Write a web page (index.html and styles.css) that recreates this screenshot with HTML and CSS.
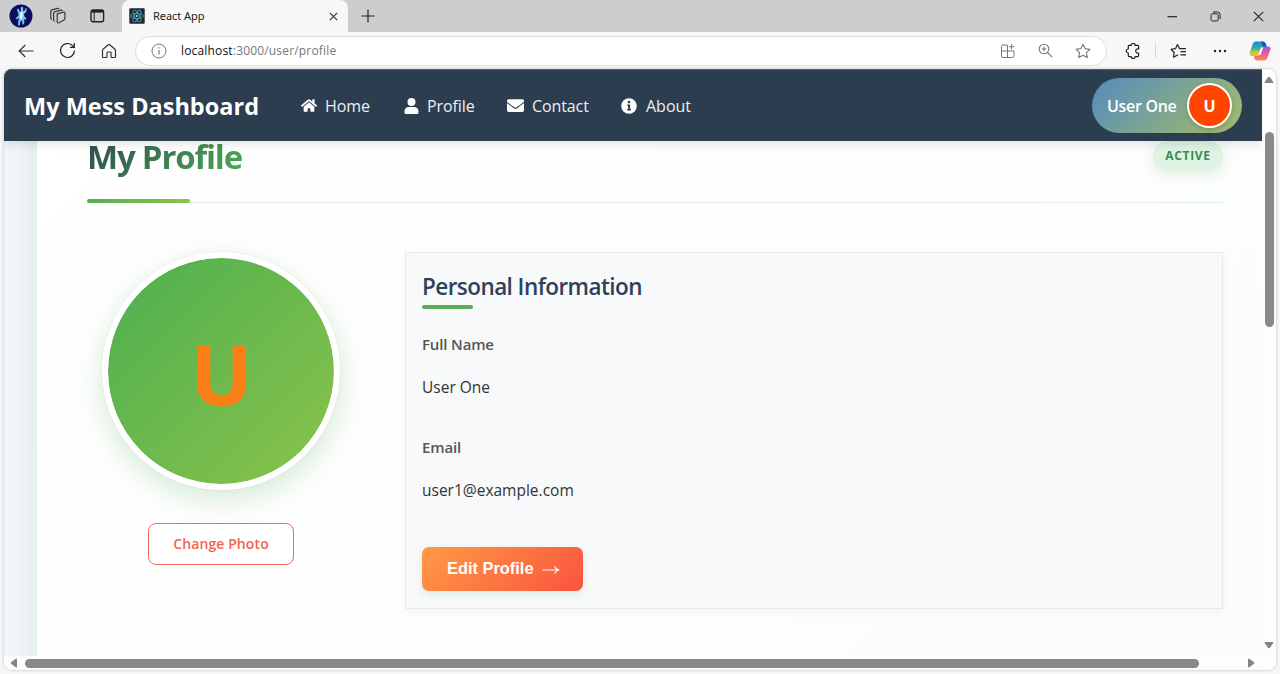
FILE: index.html
```html
<!DOCTYPE html>
<html lang="en">
<head>
<meta charset="utf-8">
<title>React App</title>
<link rel="stylesheet" href="styles.css">
</head>
<body>
<div class="browser">
  <div class="tabstrip">
    <svg class="avatar-icon" width="24" height="24" viewBox="0 0 24 24"><circle cx="12" cy="12" r="11.500" fill="#0b0f5c"/><path d="M8.500 4.500l1.500 1 .8 2.500 1-.8V3.500l1.500-1 1 1.500-.5 3 2-.5.8-2.500 1 .3-.3 3.500-2.500 2.500.8 2.500 1.600 1-.4 2-1.800-.6.4 3.500-1 2-1-.5-.3-4-1.800 1.500-.5 3.500-1.700.5.200-4.500 1-3.500-2 1.500-1.800-.3 1-1.500 2-2-.3-2.500-1.300-3z" fill="#7cc4f3"/><path d="M11.300 8l2.200.3.200 3.500-1.500 4-1.500-2 .6-2.500z" fill="#f2fbff"/></svg>
    <svg class="workspaces" width="18" height="18" viewBox="0 0 18 18" fill="none" stroke="#3b3b3b" stroke-width="1.200" stroke-linejoin="round"><path d="M8.200 6.800l6.300-1.600q1.400-.3 1.400 1.100v5.200q0 1-.9 1.400l-5 2.900q-1.500.7-1.800-.8V8q0-.8 0-1.200z"/><path d="M5.800 14.200q-1 0-1.200-1V6.100q0-1 .9-1.300L12 3.100q1-.2 1.300.9"/><path d="M3 12.300q-1-.1-1.200-1V4.200q0-1 .9-1.300l6-1.600q1-.2 1.300.7"/></svg>
    <svg class="vtabs" width="15" height="14" viewBox="0 0 15 14" fill="none" stroke="#222" stroke-width="1.400"><rect x="1" y="1" width="12.600" height="11.800" rx="2"/><path d="M1.500 2.300h11.600" stroke-width="2.600"/><path d="M4.200 3v9.500" stroke-width="1"/></svg>
    <div class="tab">
      <svg width="16" height="16" viewBox="0 0 16 16" fill="none"><rect x=".3" y=".3" width="15.400" height="15.400" rx="1" fill="#20292d"/><g stroke="#4b9cad" stroke-width=".9"><ellipse cx="8" cy="8" rx="6.500" ry="2.500"/><ellipse cx="8" cy="8" rx="6.500" ry="2.500" transform="rotate(60 8 8)"/><ellipse cx="8" cy="8" rx="6.500" ry="2.500" transform="rotate(120 8 8)"/></g><circle cx="8" cy="8" r="1.200" fill="#61c5da"/></svg>
      <span class="tab-title">React App</span>
      <svg class="tab-close" width="9" height="9" viewBox="0 0 9 9" stroke="#333" stroke-width="1.200"><path d="M.8.8l7.400 7.400M8.200.8L.8 8.200"/></svg>
    </div>
    <svg class="new-tab" width="14" height="14" viewBox="0 0 14 14" stroke="#222" stroke-width="1.200"><path d="M.5 7h13M7 .5v13"/></svg>
    <div class="window-buttons">
      <svg width="11" height="11" viewBox="0 0 11 11" stroke="#222" stroke-width="1.200"><path d="M.5 5.700h9.500"/></svg>
      <svg width="11" height="11" viewBox="0 0 11 11" fill="none" stroke="#222" stroke-width="1"><rect x="1" y="2.800" width="7.200" height="7.200" rx="1.500"/><path d="M3 1h4.500q2.600 0 2.600 2.600V8"/></svg>
      <svg width="11" height="11" viewBox="0 0 11 11" stroke="#222" stroke-width="1.100"><path d="M.8.8l9.400 9.400M10.200.8L.8 10.200"/></svg>
    </div>
  </div>
  <div class="toolbar">
    <svg width="16" height="14" viewBox="0 0 16 14" fill="none" stroke="#333" stroke-width="1.200"><path d="M15.500 7H1.200M7.300 1L1.200 7l6.100 6"/></svg>
    <svg width="17" height="17" viewBox="0 0 17 17" fill="none" stroke="#222" stroke-width="1.200"><path d="M15.500 8.500A7 7 0 1 1 13.300 3.400L15 5M15.300 1v4.300H11"/></svg>
    <svg width="16" height="16" viewBox="0 0 16 16" fill="none" stroke="#333" stroke-width="1.200" stroke-linejoin="round"><path d="M1.500 7.200q0-.6.500-1L7.300 1.700q.7-.6 1.400 0L14 6.200q.5.400.5 1v6.500q0 .8-.8.800h-2.900q-.8 0-.8-.8V10Q10 9 9 9H7Q6 9 6 10v3.700q0 .8-.8.8H2.300q-.8 0-.8-.8z"/></svg>
    <div class="address">
      <svg width="16" height="16" viewBox="0 0 16 16" fill="none" stroke="#777"><circle cx="8" cy="8" r="7"/><path d="M8 7v4.500M8 4.300v1.300" stroke-width="1.200"/></svg>
      <span class="url"><b>localhost</b>:3000/user/profile</span>
      <div class="address-icons">
        <svg width="16" height="16" viewBox="0 0 16 16" fill="none" stroke="#777"><path d="M7 2H3Q1.500 2 1.500 3.500V13Q1.500 14.500 3 14.500h9.500q1.500 0 1.500-1.500V8H1.500M7.500 2v12.500M11.500 1v5.500M8.800 3.700h5.500"/></svg>
        <svg width="15" height="15" viewBox="0 0 15 15" fill="none" stroke="#777" stroke-width="1.100"><circle cx="6" cy="6" r="4.800"/><path d="M9.500 9.500l4.700 4.700M6 3.700v4.600M3.700 6h4.600"/></svg>
        <svg width="16" height="16" viewBox="0 0 16 16" fill="none" stroke="#777" stroke-width="1.100" stroke-linejoin="round"><path d="M8 1.200l2.100 4.400 4.800.7-3.500 3.400.9 4.900L8 12.300l-4.300 2.300.9-4.900L1.100 6.300l4.800-.7z"/></svg>
      </div>
    </div>
    <div class="tools">
      <svg width="16" height="16" viewBox="0 0 16 16" fill="none" stroke="#222" stroke-width="1.200" stroke-linejoin="round"><path d="M3.300 3.200q0-.8.800-.8H6.200a2 2 0 0 1 4 0h2.600q.8 0 .8.800V6q-2.700-.4-2.900 2 .2 2.400 2.900 2v2.800q0 .8-.8.800h-2.600a2 2 0 0 1-4 0H4.100q-.8 0-.8-.8V10a2 2 0 0 1 0-4z"/></svg>
      <i class="divider"></i>
      <svg width="17" height="16" viewBox="0 0 17 16" fill="none" stroke="#222" stroke-width="1.200" stroke-linejoin="round"><path d="M8 11.800L3.500 14.200l.7-4.700L1 6.300l4.600-.7L7.500 1.500l2 4.100h6.500M10.500 8.700H16M10.500 11.800H16"/></svg>
      <svg width="14" height="4" viewBox="0 0 14 4" fill="#222"><circle cx="2" cy="2" r="1.200"/><circle cx="7" cy="2" r="1.200"/><circle cx="12" cy="2" r="1.200"/></svg>
      <svg width="22" height="20" viewBox="0 0 22 20"><defs><linearGradient id="cl" x2="0" y2="1"><stop stop-color="#178ad8"/><stop offset=".45" stop-color="#38a9a8"/><stop offset=".75" stop-color="#c7cc36"/><stop offset="1" stop-color="#f3bd24"/></linearGradient><linearGradient id="cr" x2="0" y2="1"><stop stop-color="#9b5be4"/><stop offset=".5" stop-color="#ee5a92"/><stop offset="1" stop-color="#fb8552"/></linearGradient></defs><path d="M7 .5h7q2 0 3 3l.7 2.500H14q-2 0-2.600 2l-1.700 5q-.6 2-2.700 2H3q-3 0-2.500-3L3.500 3.500Q4.500.5 7 .5z" fill="url(#cl)"/><path d="M15.500 5.500H19q3 0 2.500 3l-3 8q-1 3-3.500 3H8q-2 0-2.500-2L5 15h2.500q2 0 2.700-2l1.800-5.500q.7-2 3.500-2z" fill="url(#cr)"/><path d="M12 .5h2q2 0 3 3l.5 2H14z" fill="#1d4fbd"/><path d="M12.300 6.500h1.900l-2.700 7.500H9.300z" fill="#fff"/></svg>
    </div>
  </div>
  <div class="viewport">
    <div class="page">
      <header class="navbar">
        <span class="brand">My Mess Dashboard</span>
        <nav class="nav">
          <a class="nav-link home"><svg width="16" height="15" viewBox="0 0 576 512" fill="#fff"><path d="M280 148L96 300v164a16 16 0 0 0 16 16h112a16 16 0 0 0 16-16v-96a16 16 0 0 1 16-16h64a16 16 0 0 1 16 16v96a16 16 0 0 0 16 16h112a16 16 0 0 0 16-16V300L296 148a12 12 0 0 0-16 0zM572 251l-84-69V44a12 12 0 0 0-12-12h-56a12 12 0 0 0-12 12v73l-90-74a48 48 0 0 0-61 0L4 251a12 12 0 0 0-1 17l25 31a12 12 0 0 0 17 2L280 107a12 12 0 0 1 16 0l235 194a12 12 0 0 0 17-2l25-31a12 12 0 0 0-1-17z"/></svg><span>Home</span></a>
          <a class="nav-link profile"><svg width="15" height="16" viewBox="0 0 448 512" fill="#fff"><path d="M224 256a128 128 0 1 0 0-256 128 128 0 0 0 0 256zm90 32H134A134 134 0 0 0 0 422v42a48 48 0 0 0 48 48h352a48 48 0 0 0 48-48v-42a134 134 0 0 0-134-134z"/></svg><span>Profile</span></a>
          <a class="nav-link contact"><svg width="17" height="17" viewBox="0 0 512 512" fill="#fff"><path d="M502 191c4-3 10 0 10 5v204a48 48 0 0 1-48 48H48a48 48 0 0 1-48-48V196c0-5 6-8 10-5 22 17 52 40 155 114 21 16 57 48 91 48s71-33 91-48c103-75 133-97 155-114zM256 320c23 0 57-29 73-41 133-96 143-105 174-129a24 24 0 0 0 9-19v-19a48 48 0 0 0-48-48H48a48 48 0 0 0-48 48v19a24 24 0 0 0 9 19c31 24 41 33 174 129 17 12 50 41 73 41z"/></svg><span>Contact</span></a>
          <a class="nav-link about"><svg width="16" height="16" viewBox="0 0 16 16"><circle cx="8" cy="8" r="7.800" fill="#fff"/><path d="M8 2.800a1.300 1.300 0 1 1 0 2.600 1.300 1.300 0 0 1 0-2.600zM6.300 6.600h2.800v4.500h.9v1.400H6.300v-1.400h.8V8h-.8z" fill="#2d3d50"/></svg><span>About</span></a>
        </nav>
        <div class="user-pill"><span class="user-name">User One</span><span class="user-initial">U</span></div>
      </header>
      <main class="profile-card">
        <div class="profile-head">
          <h1 class="title">My Profile</h1>
          <span class="status">ACTIVE</span>
        </div>
        <div class="head-accent"></div>
        <div class="profile-body">
          <div class="photo-column">
            <div class="photo">U</div>
            <button class="change-photo">Change Photo</button>
          </div>
          <section class="info">
            <h2 class="info-title">Personal Information</h2>
            <div class="info-accent"></div>
            <div class="label full-name">Full Name</div>
            <div class="value value-name">User One</div>
            <div class="label label-email">Email</div>
            <div class="value value-email">user1@example.com</div>
            <button class="edit"><span>Edit Profile</span><svg width="18" height="10" viewBox="0 0 18 10" fill="none" stroke="#fff" stroke-width="1.200"><path d="M.5 6H16.500M12.500 2.500Q14 5.500 17 6 14 6.500 12.500 9.500"/></svg></button>
          </section>
        </div>
      </main>
    </div>
    <div class="scroll-y">
      <svg width="10" height="8" viewBox="0 0 10 8" fill="#858585"><path d="M4 1.300q1-1.200 2 0l3.200 4.500q.6 1.200-.7 1.200h-7q-1.300 0-.7-1.200z"/></svg>
      <i class="thumb-y"></i>
      <svg class="down" width="10" height="8" viewBox="0 0 10 8" fill="#858585"><path d="M4 6.700q1 1.200 2 0l3.200-4.500Q9.800 1 8.500 1h-7Q.2 1 .8 2.200z"/></svg>
    </div>
    <div class="scroll-x">
      <svg width="8" height="10" viewBox="0 0 8 10" fill="#858585"><path d="M1.300 4q-1.200 1 0 2l4.500 3.200q1.200.6 1.200-.7v-7Q7 .2 5.800.8z"/></svg>
      <i class="thumb-x"></i>
      <svg class="right" width="8" height="10" viewBox="0 0 8 10" fill="#858585"><path d="M6.700 4q1.200 1 0 2L2.200 9.200Q1 9.800 1 8.500v-7Q1 .2 2.200.8z"/></svg>
    </div>
  </div>
</div>
</body>
</html>
```
FILE: styles.css
```css
* { box-sizing: border-box; }
body { margin: 0; font-family: "Open Sans", "Noto Sans", sans-serif; background: #f7f7f7; overflow: hidden; }
svg { flex: none; display: block; }
h1, h2 { margin: 0; }
button { font: inherit; }
.browser { width: 1280px; height: 674px; display: flex; flex-direction: column; }

.tabstrip { height: 32px; background: #cdcdcd; display: flex; align-items: center; padding-left: 9px; }
.workspaces { margin-left: 16px; }
.vtabs { margin-left: 23px; }
.tab { align-self: stretch; width: 226px; margin-left: 17px; padding: 0 10px 0 7px; background: #f7f7f7; border-radius: 8px 8px 0 0; display: flex; align-items: center; }
.tab-title { margin-left: 8px; padding-bottom: 2px; font-family: "Noto Sans", sans-serif; font-size: 11px; letter-spacing: -0.05px; color: #222; }
.tab-close { margin-left: auto; }
.new-tab { margin-left: 13px; }
.window-buttons { margin-left: auto; padding-right: 16px; display: flex; gap: 32px; }

.toolbar { height: 37px; background: #f7f7f7; display: flex; align-items: center; padding-left: 18px; }
.toolbar > svg { margin-right: 25px; }
.toolbar > svg:nth-of-type(3) { margin-right: 18px; }
.address { width: 972px; height: 30px; padding: 0 15px; border: 1px solid #dedede; border-radius: 15px; background: #fff; display: flex; align-items: center; }
.url { margin-left: 14px; font-size: 12px; letter-spacing: .17px; color: #777; white-space: nowrap; }
.url b { font-weight: 400; color: #111; }
.address-icons { margin-left: auto; display: flex; align-items: center; gap: 22px; }
.tools { flex: 1; display: flex; align-items: center; padding-left: 18px; }
.divider { width: 1px; height: 15px; margin: 0 14px; background: #d5d5d5; }
.tools svg:nth-of-type(3) { margin: 0 22px 0 26px; }

.viewport { width: 1272px; height: 601px; margin-left: 4px; display: grid; grid-template: 587px 14px / 1258px 14px; border-radius: 8px; overflow: hidden; background: #fdfdfd; box-shadow: 0 0 3px rgba(0,0,0,.25); }
.page { overflow: hidden; background: linear-gradient(90deg, #f2f5fa, #eff4f7 15px, #e5efeb 33px); display: flex; flex-direction: column; }
.navbar { height: 72px; flex: none; position: relative; z-index: 1; padding: 0 20px; background: #2d3d50; border-top: 1px solid #536274; box-shadow: 0 2px 10px rgba(0,0,0,.13); display: flex; align-items: center; color: #fff; }
.brand { width: 277px; font-size: 23.5px; font-weight: 700; white-space: nowrap; }
.nav { flex: 1; display: flex; }
.nav-link { display: flex; align-items: center; gap: 8px; font-size: 16px; letter-spacing: -.1px; color: #ecf0f1; }
.home { width: 103px; }
.profile { width: 103px; }
.contact { width: 114px; }
.about { gap: 9px; letter-spacing: 0; }
.user-pill { width: 150px; height: 55px; padding: 0 10px 0 15px; border-radius: 28px; background: linear-gradient(135deg, #548bbd, #a5bd68); display: flex; align-items: center; justify-content: space-between; }
.user-name { font-size: 16px; font-weight: 600; letter-spacing: -.3px; white-space: nowrap; }
.user-initial { width: 45px; height: 45px; border: 2px solid #fff; border-radius: 50%; background: #ff4500; display: grid; place-items: center; font-size: 16px; font-weight: 700; box-shadow: 0 2px 5px rgba(0,0,0,.2); }

.profile-card { flex: 1; margin-left: 33px; padding: 0 39px 0 50px; background: linear-gradient(135deg, #fff, #fdfdfd 50%, #fafcfb); }
.profile-head { height: 62px; border-bottom: 1px solid #e1eeea; display: flex; justify-content: space-between; align-items: flex-start; }
.title { margin-top: -7px; padding: 0 3px 0 0; font-size: 33px; letter-spacing: -1.2px; line-height: 46px; font-weight: 700; color: transparent; background: linear-gradient(135deg, #2d4a52, #4caf50); -webkit-background-clip: text; background-clip: text; }
.status { width: 70px; height: 29px; border-radius: 15px; background: #def3e4; box-shadow: 0 4px 12px rgba(76,175,80,.18); font-size: 12px; font-weight: 700; letter-spacing: .7px; line-height: 29px; text-align: center; color: #388e4b; }
.head-accent { width: 103px; height: 4px; margin-top: -4px; border-radius: 2px; background: linear-gradient(90deg, #56ae55, #8bc34a); }
.profile-body { display: flex; align-items: flex-start; margin-top: 49px; }
.photo-column { width: 268px; flex: none; display: flex; flex-direction: column; align-items: center; margin-right: 50px; }
.photo { width: 238px; height: 238px; border: 6px solid #fff; border-radius: 50%; background: linear-gradient(135deg, #4caf50, #8bc34a) padding-box; box-shadow: 0 0 1px rgba(0,0,0,.25), 0 9px 28px rgba(76,175,80,.24); display: flex; justify-content: center; align-items: center; font-size: 82px; font-weight: 700; line-height: 1; padding: 4px 0 0 1px; color: #fa7f17; -webkit-text-stroke: 1px #fa7f17; }
.change-photo { width: 146px; height: 42px; margin-top: 33px; padding: 0 0 1px; border: 1px solid #ee6a5c; border-radius: 8px; background: #fff; color: #f26352; font-size: 14px; font-weight: 600; letter-spacing: .1px; }
.info { flex: 1; height: 357px; padding: 16px; border: 1px solid #e6eaec; background: #f8f9fb; box-shadow: 0 3px 8px rgba(0,0,0,.04); display: flex; flex-direction: column; align-items: flex-start; color: #333; }
.info-title { height: 36px; line-height: 36px; font-size: 22.5px; letter-spacing: -.56px; font-weight: 600; color: #2f4156; white-space: nowrap; }
.info-accent { width: 51px; height: 4px; border-radius: 2px; background: #56ae58; }
.label { height: 24px; line-height: 24px; margin-top: 23px; font-size: 15px; font-weight: 600; letter-spacing: -.15px; color: #555; }
.value { height: 24px; line-height: 24px; margin-top: 19px; font-size: 15.5px; }
.label-email { margin-top: 36px; }
.edit { width: 161px; height: 44px; margin-top: 45px; padding: 0 0 1px 25px; flex: none; border: 0; border-radius: 7px; background: linear-gradient(135deg, #ff9a44, #f9543f); box-shadow: 0 3px 9px rgba(76,175,80,.17); color: #fff; font-family: "Liberation Sans", Arial, sans-serif; font-size: 16.4px; font-weight: 700; display: flex; align-items: center; gap: 8px; }

.scroll-y { display: flex; flex-direction: column; align-items: center; padding-top: 7px; background: #fdfdfd; }
.thumb-y { width: 9px; height: 195px; margin-top: 48px; border-radius: 5px; background: #898989; }
.down { margin-top: auto; margin-bottom: 7px; }
.scroll-x { grid-column: 1 / 3; display: flex; align-items: center; padding-left: 6px; background: #fdfdfd; }
.thumb-x { width: 1174px; height: 9px; margin-left: 7px; border-radius: 5px; background: #898989; }
.right { margin-left: 48px; }
```
